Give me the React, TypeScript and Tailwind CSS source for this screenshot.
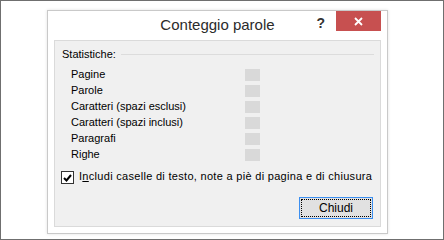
import React from "react";

const rows = [
  "Pagine",
  "Parole",
  "Caratteri (spazi esclusi)",
  "Caratteri (spazi inclusi)",
  "Paragrafi",
  "Righe",
];

const font = { fontFamily: '"Liberation Sans", Arial, sans-serif' };

const StatRow: React.FC<{ label: string }> = ({ label }) => (
  <div className="flex h-[16px] items-start">
    <div className="w-[184px] pl-[10px] text-[11px] leading-[16px] text-[#000]">{label}</div>
    <div className="mt-[3px] h-[12px] w-[15px] bg-[#d9d9d9]" />
  </div>
);

const App: React.FC = () => {
  return (
    <div
      className="h-[240px] w-[444px] overflow-hidden border border-[#6f6f6f] bg-white pl-[46px] pt-[9px]"
      style={font}
    >
      <div className="flex h-[224px] w-[341px] flex-col border border-[#c9c9c9] bg-white px-[6px] pb-[6px] shadow-[0_0_3px_rgba(0,0,0,0.12)]">
        {/* title bar */}
        <div className="grid h-[29px] grid-cols-[1fr_auto_1fr]">
          <div />
          <div className="pt-[4px] text-[15px] leading-[20px] text-[#2b2b2b]">Conteggio parole</div>
          <div className="flex items-start justify-end">
            <span className="mr-[11px] mt-[3px] text-[14px] font-bold leading-[18px] text-[#333]">?</span>
            <div className="flex h-[20px] w-[45px] items-center justify-center bg-[#c75050]">
              <svg width="9" height="9" viewBox="0 0 9 9">
                <path d="M1 1 L8 8 M8 1 L1 8" stroke="#fff" strokeWidth="1.8" />
              </svg>
            </div>
          </div>
        </div>

        {/* panel */}
        <div className="flex flex-1 flex-col border border-[#dadada] bg-[#f0f0f0] pb-[7px] pl-[6px] pr-[6px] pt-[5px]">
          <div className="flex h-[16px] items-center">
            <span className="pl-[1px] text-[11px] leading-[16px] text-[#000]">Statistiche:</span>
            <div className="ml-[5px] h-px flex-1 bg-[#dcdcdc]" />
          </div>
          <div className="mt-[4px] flex flex-col">
            {rows.map((r) => (
              <StatRow key={r} label={r} />
            ))}
          </div>
          <div className="mt-[6px] flex h-[16px] items-start">
            <div className="mt-[3px] flex h-[13px] w-[13px] items-center justify-center border border-[#333] bg-white">
              <svg width="9" height="8" viewBox="0 0 9 8">
                <path d="M1 4 L3.5 6.5 L8 1" stroke="#000" strokeWidth="2" fill="none" />
              </svg>
            </div>
            <span className="ml-[5px] whitespace-nowrap text-[11px] leading-[16px] tracking-[0.3px] text-[#000]">
              I<span className="underline">n</span>cludi caselle di testo, note a piè di pagina e di chiusura
            </span>
          </div>
          <div className="mt-auto flex justify-end pr-[1px]">
            <button className="h-[22px] w-[74px] border border-[#3c8ff0] bg-[#e1e1e1] p-[1px]">
              <div className="flex h-full w-full items-center justify-center border border-dotted border-[#000] text-[12px] leading-[16px] text-[#000]">
                Chiudi
              </div>
            </button>
          </div>
        </div>
      </div>
    </div>
  );
};

export default App;
